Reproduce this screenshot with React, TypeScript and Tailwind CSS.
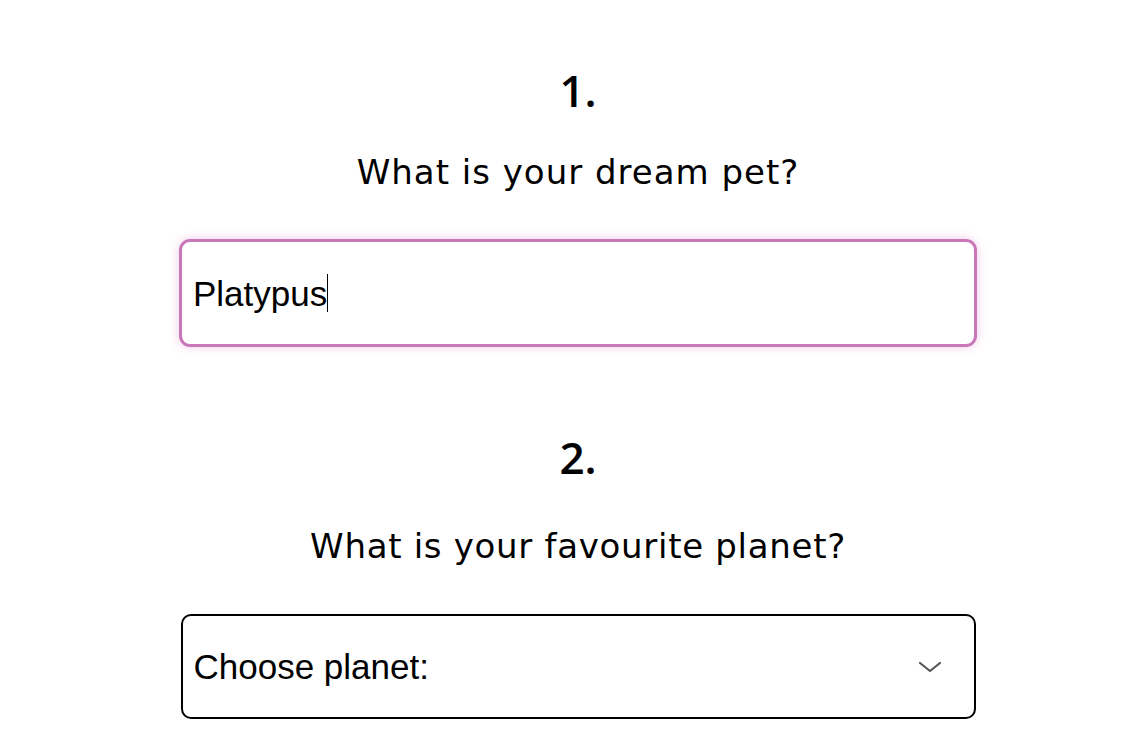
import React from 'react';

const numFont = { fontFamily: '"Open Sans", "Noto Sans", sans-serif' };
const headFont = { fontFamily: '"DejaVu Sans", "Noto Sans", sans-serif' };
const fieldFont = { fontFamily: '"Liberation Sans", Arial, sans-serif' };

const ChevronDown: React.FC = () => (
  <svg width="24" height="12" viewBox="0 0 24 12" fill="none" className="shrink-0">
    <polyline points="2,2 12,10 22,2" stroke="#555" strokeWidth="2.2" strokeLinecap="round" strokeLinejoin="round" />
  </svg>
);

export default function App() {
  return (
    <div className="min-h-screen bg-white">
      <div className="w-[798px] ml-[179px] pt-[56px] flex flex-col items-center text-black">
        <h2 className="text-[44px] font-semibold leading-[68px]" style={numFont}>1.</h2>
        <p className="mt-[24px] text-[34px] leading-[48px] tracking-[1px]" style={headFont}>What is your dream pet?</p>
        <div className="mt-[43px] w-full h-[108px] rounded-[11px] border-[3px] border-[#c878b8] shadow-[0_0_10px_rgba(215,120,195,0.4)] flex items-center px-[11px]">
          <span className="text-[35px] leading-none" style={fieldFont}>
            Platypus
          </span>
          <span className="w-px h-[38px] bg-black" />
        </div>

        <h2 className="mt-[76px] text-[44px] font-semibold leading-[68px]" style={numFont}>2.</h2>
        <p className="mt-[31px] text-[34px] leading-[48px] tracking-[0.7px]" style={headFont}>What is your favourite planet?</p>
        <div className="mt-[44px] w-[795px] h-[105px] rounded-[10px] border-2 border-black flex items-center justify-between pl-[11px] pr-[32px]">
          <span className="text-[35px] leading-none" style={fieldFont}>
            Choose planet:
          </span>
          <ChevronDown />
        </div>
      </div>
    </div>
  );
}
